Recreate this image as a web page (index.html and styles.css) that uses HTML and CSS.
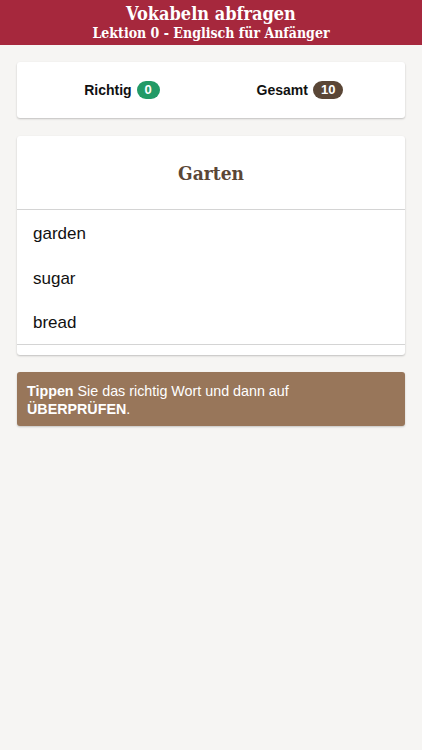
FILE: index.html
```html
<!DOCTYPE html>
<html lang="de">
<head>
<meta charset="utf-8">
<title>Vokabeln abfragen</title>
<link rel="stylesheet" href="styles.css">
</head>
<body>
<header class="topbar">
  <div class="title">Vokabeln abfragen</div>
  <div class="subtitle">Lektion 0 - Englisch für Anfänger</div>
</header>
<main class="content">
  <section class="card stats">
    <div class="stat"><span class="stat-label">Richtig</span><span class="badge badge-green">0</span></div>
    <div class="stat"><span class="stat-label">Gesamt</span><span class="badge badge-brown">10</span></div>
  </section>
  <section class="card quiz">
    <div class="quiz-head">Garten</div>
    <ul class="options">
      <li class="option">garden</li>
      <li class="option">sugar</li>
      <li class="option">bread</li>
    </ul>
    <div class="quiz-foot"></div>
  </section>
  <section class="tip">
    <b>Tippen</b> Sie das richtig Wort und dann auf <b>ÜBERPRÜFEN</b>.
  </section>
</main>
</body>
</html>
```
FILE: styles.css
```css
html, body {
  margin: 0;
  padding: 0;
  background: #f6f5f3;
  font-family: "Liberation Sans", Arial, sans-serif;
  width: 422px;
  height: 750px;
}
.topbar {
  background: #a6283d;
  color: #fff;
  text-align: center;
  font-family: "DejaVu Serif", "Liberation Serif", serif;
  font-stretch: condensed;
  font-weight: bold;
  height: 45px;
  box-sizing: border-box;
  padding-top: 4px;
}
.title {
  font-size: 18px;
  line-height: 20px;
}
.subtitle {
  font-size: 14px;
  line-height: 18px;
}
.content {
  padding: 17px;
  display: flex;
  flex-direction: column;
  gap: 17px;
}
.card {
  background: #fff;
  border-radius: 3px;
  box-shadow: 0 1px 2px rgba(0,0,0,0.22);
}
.stats {
  height: 56px;
  display: flex;
  align-items: center;
  padding: 0 16px;
  margin-bottom: 1px;
}
.stat {
  flex: 1;
  display: flex;
  justify-content: center;
  align-items: center;
  gap: 5px;
}
.stat-label {
  font-weight: bold;
  font-size: 14px;
  color: #111;
}
.badge {
  display: inline-block;
  color: #fff;
  font-weight: bold;
  font-size: 13px;
  line-height: 18px;
  height: 18px;
  padding: 0 8px;
  border-radius: 9px;
}
.badge-green { background: #229a66; }
.badge-brown { background: #5a4636; }
.quiz-head {
  height: 73px;
  display: flex;
  align-items: center;
  justify-content: center;
  font-family: "DejaVu Serif", "Liberation Serif", serif;
  font-stretch: condensed;
  font-weight: bold;
  font-size: 19px;
  color: #5a4636;
  border-bottom: 1px solid #d4d4d4;
}
.options {
  list-style: none;
  margin: 0;
  padding: 0;
  border-bottom: 1px solid #d4d4d4;
}
.option {
  height: 44.5px;
  box-sizing: border-box;
  padding-top: 3px;
  line-height: 41.5px;
  padding-left: 16px;
  font-size: 17px;
  color: #111;
}
.quiz-foot {
  height: 10px;
}
.tip {
  background: #98765a;
  color: #fff;
  border-radius: 3px;
  box-shadow: 0 1px 2px rgba(0,0,0,0.2);
  padding: 10px 10px 8px;
  font-size: 14.3px;
  line-height: 18px;
}
```
